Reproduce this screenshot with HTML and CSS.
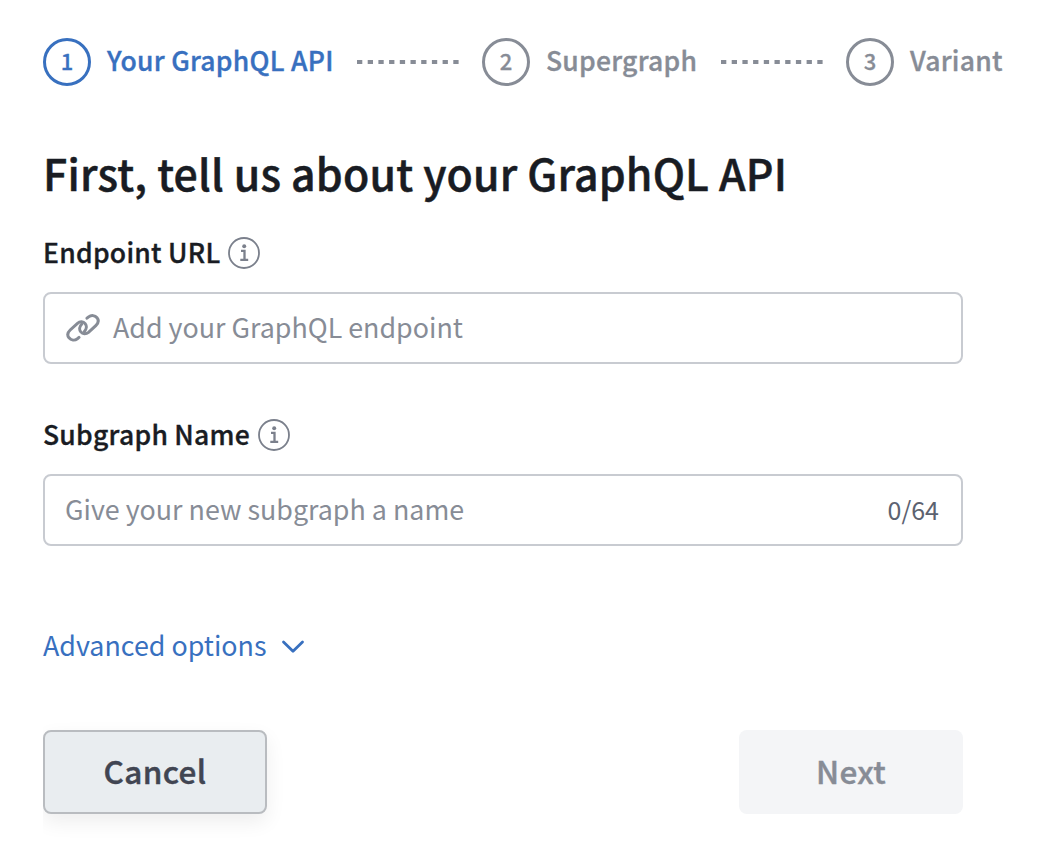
FILE: index.html
```html
<!DOCTYPE html>
<html lang="en">
<head>
<meta charset="utf-8">
<title>Your GraphQL API</title>
<link rel="stylesheet" href="styles.css">
</head>
<body>
<main class="page">
  <ol class="stepper">
    <li class="step step-active"><span class="step-number">1</span><span class="step-label label-api">Your GraphQL API</span></li>
    <li class="connector"><svg width="102" height="4" viewBox="0 0 102 4"><path d="M0 2H102" stroke="currentColor" stroke-width="4" stroke-dasharray="5.3 5.4"/></svg></li>
    <li class="step"><span class="step-number">2</span><span class="step-label label-super">Supergraph</span></li>
    <li class="connector"><svg width="102" height="4" viewBox="0 0 102 4"><path d="M0 2H102" stroke="currentColor" stroke-width="4" stroke-dasharray="5.3 5.4"/></svg></li>
    <li class="step"><span class="step-number">3</span><span class="step-label label-variant">Variant</span></li>
  </ol>
  <form class="form">
    <h1 class="title">First, tell us about your GraphQL API</h1>
    <div class="field">
      <div class="field-label"><span class="label-endpoint">Endpoint URL</span>
        <svg class="info" width="32" height="32" viewBox="0 0 32 32" fill="none" stroke="currentColor"><circle cx="16" cy="16" r="15" stroke-width="1.8"/><path d="M13 13.800h3.500v9M12.300 22.800h7.900" stroke-width="2.300"/><circle cx="16.200" cy="9.200" r="2" fill="currentColor" stroke="none"/></svg>
      </div>
      <div class="input">
        <svg class="link-icon" width="34" height="28" viewBox="0 0 34 28" fill="none" stroke="currentColor" stroke-width="3" stroke-linecap="round"><path d="M13 23.400 11.400 24.700C8.700 26.700 5 26.300 3 23.800S1.900 18.200 4.200 16L11.500 9.300C14 7.200 17.300 7.400 19.200 9.700S20.400 15.200 18.400 17.400"/><path d="M21 4.200 22.600 2.900C25.300 .9 29 1.300 31 3.800S32.100 9.400 29.800 11.600L22.500 18.300C20 20.400 16.700 20.200 14.800 17.900S13.600 12.400 15.600 10.200"/></svg>
        <span class="placeholder">Add your GraphQL endpoint</span>
      </div>
    </div>
    <div class="field">
      <div class="field-label"><span class="label-subgraph">Subgraph Name</span>
        <svg class="info" width="32" height="32" viewBox="0 0 32 32" fill="none" stroke="currentColor"><circle cx="16" cy="16" r="15" stroke-width="1.8"/><path d="M13 13.800h3.500v9M12.300 22.800h7.900" stroke-width="2.300"/><circle cx="16.200" cy="9.200" r="2" fill="currentColor" stroke="none"/></svg>
      </div>
      <div class="input">
        <span class="placeholder">Give your new subgraph a name</span>
        <span class="counter">0/64</span>
      </div>
    </div>
    <div class="advanced"><span>Advanced options</span>
      <svg width="24" height="16" viewBox="0 0 24 16" fill="none" stroke="currentColor" stroke-width="2.800" stroke-linecap="round" stroke-linejoin="round"><path d="M2.500 4 12 13.300 21.500 4"/></svg>
    </div>
    <div class="actions">
      <button class="button cancel" type="button"><span>Cancel</span></button>
      <button class="button next" type="button" disabled><span>Next</span></button>
    </div>
  </form>
</main>
</body>
</html>
```
FILE: styles.css
```css
* { box-sizing: border-box; }
body {
  margin: 0;
  background: #fff;
  color: #191c23;
  font-family: "Noto Sans CJK SC", "Noto Sans", sans-serif;
  font-weight: 500;
}
.page { padding: 38px 0 0 43px; height: 856px; overflow: hidden; }
.stepper {
  display: flex;
  align-items: center;
  gap: 24px;
  height: 48px;
  margin: 0;
  padding: 0;
  list-style: none;
  color: #878c96;
}
.step { display: flex; align-items: center; gap: 16px; flex: none; }
.step-active { color: #3870bf; }
.step-number {
  width: 48px;
  height: 48px;
  border: 3px solid currentColor;
  border-radius: 50%;
  font-size: 22px;
  line-height: 39px;
  text-align: center;
  -webkit-text-stroke: 0.3px currentColor;
}
.step-label {
  font-size: 26.5px;
  line-height: 44px;
  padding-bottom: 4px;
  white-space: nowrap;
  letter-spacing: 0.26px;
  -webkit-text-stroke: 0.35px currentColor;
}
.label-api { width: 226px; }
.label-super { width: 151px; }
.connector { display: flex; flex: none; margin-right: -1px; }
.form { width: 920px; }
.title {
  margin: 56px 0 0;
  font-size: 42.8px;
  font-weight: 500;
  line-height: 60px;
  letter-spacing: 0.2px;
  white-space: nowrap;
  -webkit-text-stroke: 0.5px currentColor;
}
.field { height: 182px; padding-top: 35px; }
.field-label {
  display: flex;
  align-items: center;
  gap: 9px;
  height: 32px;
  font-size: 26.5px;
  letter-spacing: 0.26px;
  -webkit-text-stroke: 0.35px currentColor;
}
.field-label span { line-height: 28px; padding-bottom: 3px; white-space: nowrap; }
.label-endpoint { width: 176px; }
.label-subgraph { width: 206px; }
.info { color: #7b808c; flex: none; }
.input {
  display: flex;
  align-items: center;
  height: 72px;
  margin-top: 23px;
  padding: 0 22px 0 20px;
  border: 2px solid #c8cbd1;
  border-radius: 8px;
  font-size: 26.85px;
  font-weight: 400;
  color: #878c96;
}
.input span { line-height: 40px; padding-bottom: 3px; white-space: nowrap; }
.link-icon { margin: 0 13px 0 1px; flex: none; }
.input .counter { margin-left: auto; font-size: 25px; color: #5c6270; padding-bottom: 2px; }
.advanced {
  display: flex;
  align-items: center;
  gap: 14px;
  height: 40px;
  margin-top: 60px;
  font-size: 26.85px;
  font-weight: 400;
  color: #3870bf;
}
.advanced span { padding-bottom: 3px; line-height: 37px; }
.actions {
  display: flex;
  justify-content: space-between;
  height: 126px;
  margin-top: 54px;
  padding-top: 10px;
  overflow: clip;
}
.button {
  width: 224px;
  height: 84px;
  padding: 0 0 5px;
  border-radius: 8px;
  font-family: inherit;
  font-size: 31.5px;
  font-weight: 500;
  letter-spacing: 0.35px;
  -webkit-text-stroke: 0.45px currentColor;
}
.cancel { background: #e9edf0; border: 2px solid #b9bcc0; color: #414552; box-shadow: 0 8px 20px rgba(0,0,0,.07); }
.next { background: #f4f5f7; border: 0; color: #878c96; }
```
